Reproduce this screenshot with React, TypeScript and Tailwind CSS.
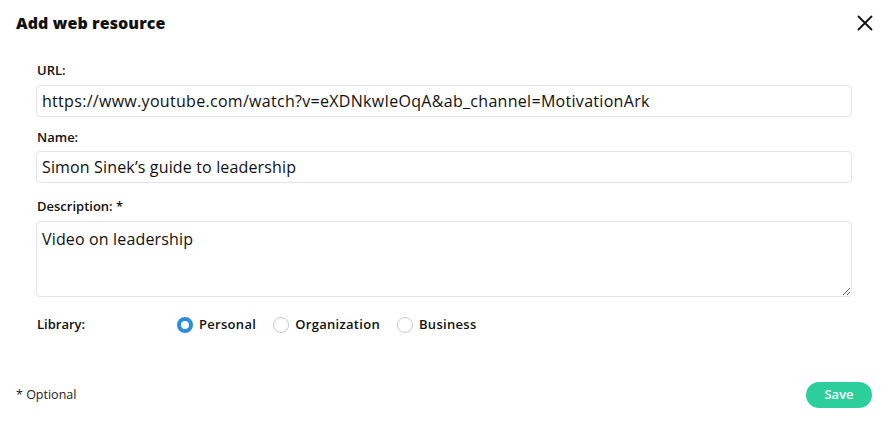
import { useState } from "react";

const font = { fontFamily: '"Open Sans", "Noto Sans", sans-serif' };

export default function App() {
  const [library, setLibrary] = useState("personal");
  const options = [
    { id: "personal", label: "Personal" },
    { id: "organization", label: "Organization" },
    { id: "business", label: "Business" },
  ];

  return (
    <div className="w-[890px] h-[426px] bg-white text-[#111] relative" style={font}>
      {/* Header */}
      <div className="flex items-center justify-between pl-4 pr-[15px] pt-[11px] h-[35px]">
        <h1 className="text-[16px] leading-6 font-extrabold tracking-[0.1px]">Add web resource</h1>
        <button className="w-5 h-5 flex items-center justify-center text-[#111]">
          <svg width="16" height="16" viewBox="0 0 16 16" fill="none" stroke="currentColor" strokeWidth="1.8" strokeLinecap="round">
            <path d="M1.5 1.5 L14.5 14.5 M14.5 1.5 L1.5 14.5" />
          </svg>
        </button>
      </div>

      {/* Form */}
      <div className="pl-9 pr-[38px] pt-[26px]">
        <label className="block text-[13px] leading-[18.75px] font-semibold mb-[5px] pl-px">URL:</label>
        <input
          className="w-full h-8 border border-[#e3e3ec] rounded-[4px] px-[5px] text-[16px] tracking-[0.3px] outline-none"
          defaultValue="https://www.youtube.com/watch?v=eXDNkwIeOqA&ab_channel=MotivationArk"
        />

        <label className="block text-[13px] leading-[18.75px] font-semibold mt-[11px] mb-[4px] pl-px">Name:</label>
        <input
          className="w-full h-8 border border-[#e3e3ec] rounded-[4px] px-[5px] text-[16px] tracking-[0.15px] outline-none"
          defaultValue="Simon Sinek’s guide to leadership"
        />

        <label className="block text-[13px] leading-[18.75px] font-semibold mt-[14px] mb-[6px] pl-px">Description: *</label>
        <textarea
          className="block w-full h-[76px] border border-[#e3e3ec] rounded-[4px] px-[5px] py-[5px] text-[16px] tracking-[0.15px] outline-none resize-y"
          defaultValue="Video on leadership"
        />

        <div className="flex items-center mt-[18px]">
          <span className="w-[141px] text-[13px] font-semibold pl-px">Library:</span>
          <div className="flex items-center gap-[17px]">
            {options.map((o) => (
              <label key={o.id} className="flex items-center gap-[6px] cursor-pointer" onClick={() => setLibrary(o.id)}>
                {library === o.id ? (
                  <span className="w-4 h-4 rounded-full border-[4px] border-[#2a8de0] bg-white" />
                ) : (
                  <span className="w-4 h-4 rounded-full border border-[#c9c9d6] bg-white" />
                )}
                <span className="text-[13px] font-semibold tracking-[0.3px]">{o.label}</span>
              </label>
            ))}
          </div>
        </div>
      </div>

      {/* Footer */}
      <div className="absolute left-0 right-0 bottom-[18px] flex items-center justify-between pl-4 pr-[18px]">
        <span className="text-[12.5px] text-[#222]">* Optional</span>
        <button className="w-[66px] h-[26px] rounded-full bg-[#2ccf9c] text-white text-[13px] font-semibold">
          Save
        </button>
      </div>
    </div>
  );
}
